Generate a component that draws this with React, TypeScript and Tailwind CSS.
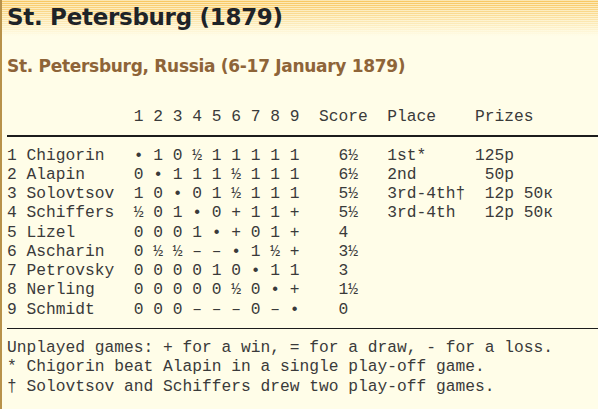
const players = [
    {n: "1", name: "Chigorin", res: "• 1 0 ½ 1 1 1 1 1", score: "6½", place: "1st*", prize: "125p", pc: 48},
    {n: "2", name: "Alapin", res: "0 • 1 1 1 ½ 1 1 1", score: "6½", place: "2nd", prize: "50p", pc: 49},
    {n: "3", name: "Solovtsov", res: "1 0 • 0 1 ½ 1 1 1", score: "5½", place: "3rd-4th†", prize: "12p 50к", pc: 49},
    {n: "4", name: "Schiffers", res: "½ 0 1 • 0 + 1 1 +", score: "5½", place: "3rd-4th", prize: "12p 50к", pc: 49},
    {n: "5", name: "Lizel", res: "0 0 0 1 • + 0 1 +", score: "4", place: "", prize: "", pc: 48},
    {n: "6", name: "Ascharin", res: "0 ½ ½ – – • 1 ½ +", score: "3½", place: "", prize: "", pc: 48},
    {n: "7", name: "Petrovsky", res: "0 0 0 0 1 0 • 1 1", score: "3", place: "", prize: "", pc: 48},
    {n: "8", name: "Nerling", res: "0 0 0 0 0 ½ 0 • +", score: "1½", place: "", prize: "", pc: 48},
    {n: "9", name: "Schmidt", res: "0 0 0 – – – 0 – •", score: "0", place: "", prize: "", pc: 48},
];

const notes = [
    "Unplayed games: + for a win, = for a draw, - for a loss.",
    "* Chigorin beat Alapin in a single play-off game.",
    "† Solovtsov and Schiffers drew two play-off games.",
];

// put each piece of text at its column, like a <pre> block
const cols = (cells: [number, string][]): string => {
    let s = "";
    for (const [col, text] of cells) {
        if (!text) continue;
        s = s.padEnd(col, " ") + text;
    }
    return s;
};

function Line({text}: {text: string}) {
    return <div className="h-[19.25px] leading-[19.25px] whitespace-pre">{text}</div>;
}

function Rule() {
    return (
        <div className="h-[19.25px] flex items-center">
            <div className="h-[1.5px] w-full bg-[#1c1c1c]" />
        </div>
    );
}

export default function App() {
    const header = cols([[13, "1 2 3 4 5 6 7 8 9"], [32, "Score"], [39, "Place"], [48, "Prizes"]]);

    return (
        <div className="min-h-[409px] w-full border-l-2 border-[#b8924a] bg-[#fffde8] bg-no-repeat [background-size:100%_36px] [background-image:repeating-linear-gradient(180deg,rgba(255,253,232,0.6)_0px,rgba(255,253,232,0.6)_1px,transparent_1px,transparent_2px),linear-gradient(180deg,#f8c65e,#fffde8)] pl-[5px] overflow-hidden">
            <h1 className="pt-[3px] text-[23px] leading-[28px] tracking-[-0.3px] font-bold text-[#1e2328] font-['DejaVu_Sans',Verdana,sans-serif]">
                St. Petersburg (1879)
            </h1>
            <h2 className="mt-[25px] text-[17px] leading-[20px] tracking-[-0.3px] font-bold text-[#8e6438] font-['DejaVu_Sans',Verdana,sans-serif]">
                St. Petersburg, Russia (6-17 January 1879)
            </h2>

            <div className="mt-[31px] text-[16.25px] text-[#3a3a3a] font-['Liberation_Mono','Courier_New',monospace]">
                <Line text={header} />
                <Rule />
                {players.map((p) => (
                    <Line
                        key={`row-${p.n}`}
                        text={cols([[0, `${p.n} ${p.name}`], [13, p.res], [34, p.score], [39, p.place], [p.pc, p.prize]])}
                    />
                ))}
                <Rule />
                {notes.map((note) => (
                    <Line key={note} text={note} />
                ))}
            </div>
        </div>
    );
}
